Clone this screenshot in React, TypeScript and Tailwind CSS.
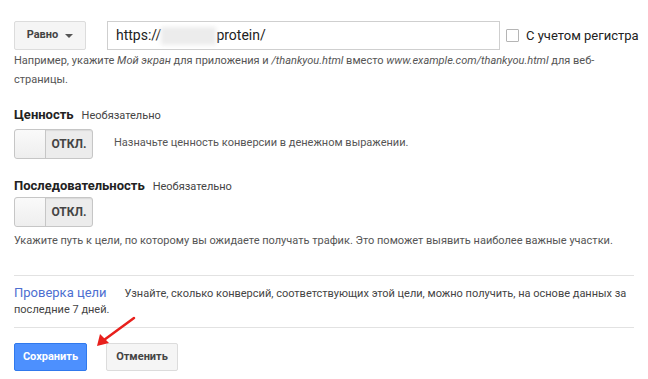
import React from "react";

const Toggle = () => (
  <div className="flex h-[30px] w-[79px] rounded-[3px] border border-[#c6c6c6] bg-[#ececec] shadow-[inset_0_1px_1px_rgba(0,0,0,0.08)]">
    <div className="w-[31px] rounded-l-[3px] border-r border-[#c6c6c6] bg-gradient-to-b from-[#fafafa] to-[#eeeeee]" />
    <div className="flex flex-1 items-center justify-center text-[12px] font-bold text-[#444]">ОТКЛ.</div>
  </div>
);

export default function App() {
  return (
    <div className="w-[648px] h-[379px] bg-white pl-[14px] pt-[21px] font-['Roboto',sans-serif] text-[#444]">
      <div className="flex items-center">
        <button className="flex h-[29px] w-[72px] items-center justify-center gap-[7px] rounded-[2px] border border-[#dcdcdc] bg-[#f5f5f5] text-[11px] font-bold text-[#444]">
          Равно
          <span className="h-0 w-0 border-x-[4px] border-t-[4px] border-x-transparent border-t-[#555]" />
        </button>
        <div className="ml-[21px] flex h-[29px] w-[393px] items-center border border-[#cfcfcf] px-[8px] text-[14px] text-[#222]">
          https://
          <span className="inline-block h-[18px] w-[55px] bg-[#ececec] blur-[2px]" />
          protein/
        </div>
        <span className="ml-[6px] h-[13px] w-[13px] rounded-[1px] border border-[#b5b5b5] bg-white" />
        <span className="ml-[7px] text-[13px] text-[#222]">С учетом регистра</span>
      </div>
      <p className="mt-[1px] w-[600px] text-[11px] leading-[19px] text-[#555]">
        Например, укажите <i>Мой экран</i> для приложения и <i>/thankyou.html</i> вместо <i>www.example.com/thankyou.html</i> для веб-страницы.
      </p>

      <div className="mt-[16px] flex items-baseline gap-[8px]">
        <span className="text-[13px] font-bold text-[#222]">Ценность</span>
        <span className="text-[11px] text-[#444]">Необязательно</span>
      </div>
      <div className="mt-[4px] flex items-center">
        <Toggle />
        <span className="ml-[21px] text-[11px] text-[#555]">Назначьте ценность конверсии в денежном выражении.</span>
      </div>

      <div className="mt-[17px] flex items-baseline gap-[8px]">
        <span className="text-[13px] font-bold text-[#222]">Последовательность</span>
        <span className="text-[11px] text-[#444]">Необязательно</span>
      </div>
      <div className="mt-[2px]">
        <Toggle />
      </div>
      <p className="mt-[6px] text-[11px] leading-[16px] text-[#555]">
        Укажите путь к цели, по которому вы ожидаете получать трафик. Это поможет выявить наиболее важные участки.
      </p>

      <div className="mt-[26px] w-[620px] border-t border-[#e2e2e2] pb-[9px] pt-[9px]">
        <p className="text-[11px] leading-[16px] text-[#444]">
          <span className="mr-[18px] text-[13px] text-[#4d6fd1]">Проверка цели</span>
          Узнайте, сколько конверсий, соответствующих этой цели, можно получить, на основе данных за последние 7 дней.
        </p>
      </div>
      <div className="relative flex w-[620px] gap-[19px] border-t border-[#e2e2e2] pt-[15px]">
        <button className="h-[28px] w-[73px] rounded-[2px] border border-[#3079ed] bg-[#4d90fe] text-[11px] font-bold text-white">
          Сохранить
        </button>
        <button className="h-[28px] w-[72px] rounded-[2px] border border-[#dcdcdc] bg-[#f5f5f5] text-[11px] font-bold text-[#444]">
          Отменить
        </button>
        <svg className="absolute left-[64px] top-[-12px]" width="60" height="36" viewBox="0 0 60 36">
          <line x1="56" y1="2" x2="26" y2="24" stroke="#e8201c" strokeWidth="2.5" strokeLinecap="round" />
          <polygon points="19,30 22,18 31,27" fill="#e8201c" />
        </svg>
      </div>
    </div>
  );
}
